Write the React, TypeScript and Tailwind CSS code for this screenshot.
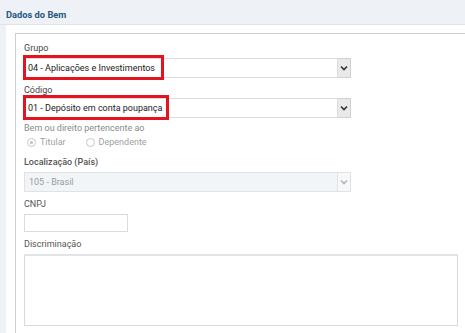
import React from "react";

function Chevron({ color }: { color: string }) {
  return (
    <svg width="8" height="6" viewBox="0 0 8 6">
      <path d="M1 1.5 L4 4.5 L7 1.5" fill="none" stroke={color} strokeWidth="1.6" />
    </svg>
  );
}

function Select({ text, redWidth, disabled }: { text: string; redWidth?: number; disabled?: boolean }) {
  return (
    <div className="relative flex h-[20px] w-[327px]">
      <div
        className={
          disabled
            ? "flex flex-1 items-center border border-[#dfe3e7] bg-[#f2f5f8] pl-[4px] text-[9px] text-[#9a9a9a]"
            : "flex flex-1 items-center border border-[#dcdcdc] bg-white pl-[3px] text-[9px] text-[#1a1a1a]"
        }
      >
        {text}
      </div>
      <div
        className={
          disabled
            ? "flex w-[13px] items-center justify-center border border-l-0 border-[#dfe3e7] bg-[#f7f8fa]"
            : "flex w-[13px] items-center justify-center border border-l-0 border-[#d2d2d2] bg-[#e9e9e9]"
        }
      >
        <Chevron color={disabled ? "#b5b5b5" : "#333"} />
      </div>
      {redWidth ? (
        <div
          className="absolute left-[-1px] top-[-3px] h-[25px] border-[3px] border-[#e3141f]"
          style={{ width: redWidth }}
        />
      ) : null}
    </div>
  );
}

function Radio({ checked, label }: { checked?: boolean; label: string }) {
  return (
    <div className="flex items-center gap-[4px]">
      <div className="flex h-[9px] w-[9px] items-center justify-center rounded-full border border-[#c8c8c8] bg-white">
        {checked ? <div className="h-[3px] w-[3px] rounded-full bg-[#c0c0c0]" /> : null}
      </div>
      <span className="text-[9px] leading-[11px] text-[#a0a0a0]">{label}</span>
    </div>
  );
}

export default function App() {
  return (
    <div
      className="flex h-[333px] w-[465px] flex-col overflow-hidden bg-white"
      style={{ fontFamily: "Roboto, 'Liberation Sans', sans-serif" }}
    >
      <div className="h-[25px] shrink-0 border-b border-[#dde6ee] bg-[#eef2f7] pl-[6px] pt-[9px] text-[9.3px] font-bold leading-[11px] text-[#255583]">
        Dados do Bem
      </div>
      <div className="flex flex-1">
        <div className="w-[6px] bg-[#eef2f7]" />
        <div className="flex-1 bg-white pl-[9px] pt-[8px]">
          <div className="h-full border-l border-t border-[#cfcfcf] pl-[8px] pt-[9px] leading-[11px]">
            <div className="text-[9px] text-[#444]">Grupo</div>
            <div className="mt-[4px]">
              <Select text="04 - Aplicações e Investimentos" redWidth={141} />
            </div>
            <div className="mt-[7px] text-[9px] text-[#444]">Código</div>
            <div className="mt-[2px]">
              <Select text="01 - Depósito em conta poupança" redWidth={146} />
            </div>
            <div className="mt-[5px] text-[9px] text-[#8a8a8a]">Bem ou direito pertencente ao</div>
            <div className="mt-[3px] flex h-[11px] gap-[20px] pl-[3px]">
              <Radio checked label="Titular" />
              <Radio label="Dependente" />
            </div>
            <div className="mt-[9px] text-[9px] font-medium text-[#555]">Localização (País)</div>
            <div className="mt-[4px]">
              <Select text="105 - Brasil" disabled />
            </div>
            <div className="mt-[7px] text-[9px] text-[#555]">CNPJ</div>
            <div className="mt-[4px] h-[18px] w-[104px] border border-[#d8dce0] bg-white" />
            <div className="mt-[7px] text-[9px] text-[#555]">Discriminação</div>
            <div className="mt-[4px] h-[72px] w-[434px] border border-[#d6dbdf] border-t-2 border-t-[#e1e5e9] bg-white" />
          </div>
        </div>
      </div>
    </div>
  );
}
